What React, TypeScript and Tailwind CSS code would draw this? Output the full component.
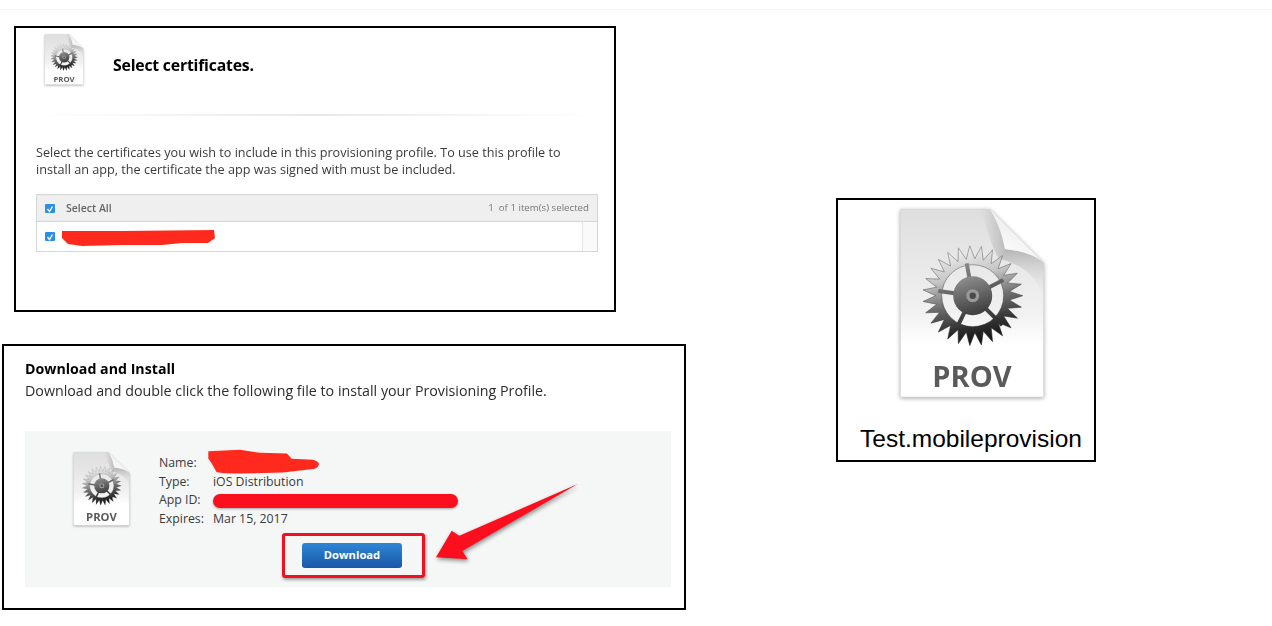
import React, { useId } from 'react';

// gear ring with long pointed teeth, hole left open so the file colour shows through
const gearPath = (() => {
  const cx = 72.7;
  const cy = 86.7;
  const teeth = 27;
  const pts: string[] = [];
  for (let i = 0; i < teeth; i++) {
    const step = (Math.PI * 2) / teeth;
    const a = i * step;
    const list: [number, number][] = [
      [37, a - step / 2],
      [50, a],
    ];
    list.forEach(([r, t]) => {
      pts.push(`${(cx + r * Math.cos(t)).toFixed(2)} ${(cy + r * Math.sin(t)).toFixed(2)}`);
    });
  }
  const ring = `M${cx - 31} ${cy}a31 31 0 1 0 62 0a31 31 0 1 0 -62 0Z`;
  return `M${pts.join('L')}Z ${ring}`;
})();

const spokes = [
  [66.7, 54.3],
  [103.3, 71],
  [102.3, 116],
  [56.7, 119],
  [38.3, 82],
];

const ProvIcon = ({ className }: { className: string }) => {
  const id = useId().replace(/[^a-zA-Z0-9]/g, '');
  return (
    <svg viewBox="0 0 144 190" className={className}>
      <defs>
        <linearGradient id={`${id}file`} x1="0" y1="0" x2="0" y2="1">
          <stop offset="0" stopColor="#dedede" />
          <stop offset="0.55" stopColor="#f1f1f1" />
          <stop offset="0.72" stopColor="#ffffff" />
        </linearGradient>
        <linearGradient id={`${id}gear`} gradientUnits="userSpaceOnUse" x1="60" y1="37" x2="82" y2="137">
          <stop offset="0" stopColor="#f2f2f2" />
          <stop offset="0.3" stopColor="#c6c6c6" />
          <stop offset="0.55" stopColor="#6f6f6f" />
          <stop offset="0.8" stopColor="#2e2e2e" />
          <stop offset="1" stopColor="#0c0c0c" />
        </linearGradient>
        <linearGradient id={`${id}edge`} gradientUnits="userSpaceOnUse" x1="60" y1="37" x2="82" y2="137">
          <stop offset="0" stopColor="#7c7c7c" />
          <stop offset="1" stopColor="#1c1c1c" />
        </linearGradient>
        <linearGradient id={`${id}spoke`} gradientUnits="userSpaceOnUse" x1="60" y1="50" x2="82" y2="122">
          <stop offset="0" stopColor="#8e8e8e" />
          <stop offset="1" stopColor="#2a2a2a" />
        </linearGradient>
        <linearGradient id={`${id}hub`} x1="0" y1="0" x2="0.3" y2="1">
          <stop offset="0" stopColor="#969696" />
          <stop offset="1" stopColor="#424242" />
        </linearGradient>
        <linearGradient id={`${id}fold`} x1="0.2" y1="1" x2="0.8" y2="0">
          <stop offset="0" stopColor="#ffffff" />
          <stop offset="1" stopColor="#e6e6e6" />
        </linearGradient>
        <linearGradient id={`${id}under`} x1="0" y1="0" x2="0" y2="1">
          <stop offset="0" stopColor="#b4b4b4" />
          <stop offset="1" stopColor="#eeeeee" stopOpacity="0" />
        </linearGradient>
        <linearGradient id={`${id}crease`} x1="0" y1="0" x2="1" y2="0">
          <stop offset="0" stopColor="#c4c4c4" stopOpacity="0" />
          <stop offset="1" stopColor="#bcbcbc" />
        </linearGradient>
      </defs>
      <path d="M0.5 0.5H90L143.5 54V188H0.5Z" fill={`url(#${id}file)`} stroke="#d6d6d6" strokeWidth="0.6" />
      <path d="M105 40C120 42 136 46 143.5 54V92C141 72 125 56 100 50Z" fill={`url(#${id}under)`} />
      <path d="M80 0.5H90C100 16 103 30 105 40L100 50C92 42 88 20 80 0.5Z" fill={`url(#${id}crease)`} />
      <path d="M90 0.5C100 16 103 30 105 40C122 42 136 46 143.5 54Z" fill={`url(#${id}fold)`} />
      <path d={gearPath} fillRule="evenodd" fill={`url(#${id}gear)`} stroke={`url(#${id}edge)`} strokeWidth="0.6" />
      {spokes.map(([x, y]) => (
        <line key={x} x1="72.7" y1="86.7" x2={x} y2={y} stroke={`url(#${id}spoke)`} strokeWidth="4" />
      ))}
      <circle cx="72.7" cy="86.7" r="19.5" fill={`url(#${id}hub)`} />
      <circle cx="72.7" cy="86.7" r="6.5" fill="#9a9a9a" />
      <circle cx="72.7" cy="86.7" r="3.2" fill="#4a4a4a" />
      <text x="72" y="178" textAnchor="middle" fontFamily="'Open Sans', sans-serif" fontWeight="700" fontSize="29" fill="#5a5a5a">
        PROV
      </text>
    </svg>
  );
};

const Tick = () => (
  <span className="flex h-[9px] w-[10px] shrink-0 items-center justify-center rounded-[1px] bg-[#2a8fe6]">
    <svg viewBox="0 0 10 9" className="h-[9px] w-[10px]">
      <path d="M2.5 5L4.5 7.5L7.5 2.5" fill="none" stroke="#ffffff" strokeWidth="1.3" />
    </svg>
  </span>
);

const App = () => {
  return (
    <div className="h-[626px] w-[1272px] overflow-hidden bg-white font-['Open_Sans',sans-serif]">
      <div className="h-[10px] border-b border-[#f2f2f2]" />
      <div className="flex items-start">
        <div className="flex w-[686px] shrink-0 flex-col">
          {/* Select certificates */}
          <section className="ml-[14px] mt-[16px] h-[286px] w-[602px] border-2 border-black">
            <div className="pl-[20px] pr-[16px] blur-[0.4px]">
              <div className="flex h-[57px] items-end">
                <ProvIcon className="ml-[8px] h-[51px] w-[40px] drop-shadow-[0_1px_1px_rgba(0,0,0,0.3)]" />
                <h2 className="mb-[10px] ml-[29px] text-[15.8px] font-bold leading-[20px] tracking-[-0.2px] text-black">
                  Select certificates.
                </h2>
              </div>
              <div className="mt-[29px] h-[2px] bg-gradient-to-r from-white via-[#e8e8e8] to-white" />
              <p className="mt-[28px] text-[12.65px] leading-[17px] text-[#3a3a3a]">
                Select the certificates you wish to include in this provisioning profile. To use this profile to
                <br />
                install an app, the certificate the app was signed with must be included.
              </p>
              <div className="mt-[16px] border-[1.5px] border-[#d6d6d6]">
                <div className="flex h-[27px] items-center border-b-[1.5px] border-[#d6d6d6] bg-[#efefef] pl-[8px] pr-[8px]">
                  <Tick />
                  <span className="ml-[11px] mt-[1px] text-[10.5px] font-semibold text-[#666]">Select All</span>
                  <span className="ml-auto text-[9.7px] text-[#777]">1&nbsp;&nbsp;of 1 item(s) selected</span>
                </div>
                <div className="flex h-[29px] items-center pl-[8px]">
                  <Tick />
                  <svg viewBox="0 0 153 16" className="ml-[7px] mt-[2px] h-[16px] w-[153px]">
                    <path d="M0 1H60L152 0L153 8L146 13L120 13L100 15L60 15L20 16L6 14L0 8Z" fill="#ff2a1d" />
                  </svg>
                  <div className="ml-auto h-full w-[15px] border-l border-[#e4e4e4] bg-[#fafafa]" />
                </div>
              </div>
            </div>
          </section>

          {/* Download and Install */}
          <section className="ml-[2px] mt-[32px] h-[266px] w-[684px] border-2 border-black pl-[21px] pr-[13px] pt-[14px]">
            <h2 className="text-[14.2px] font-bold leading-[18px] text-black blur-[0.3px]">Download and Install</h2>
            <p className="mt-[2px] text-[14.25px] leading-[22px] text-[#2c2c2c] blur-[0.3px]">
              Download and double click the following file to install your Provisioning Profile.
            </p>
            <div className="relative mt-[29px] flex h-[156px] items-start bg-[#f5f7f6]">
              <ProvIcon className="ml-[48px] mt-[21px] h-[74px] w-[57px] drop-shadow-[0_1px_1px_rgba(0,0,0,0.3)]" />
              <div className="ml-[29px] mt-[23px] text-[12.3px] leading-[18.7px] text-[#3a3a3a]">
                <div className="grid grid-cols-[54px_1fr]">
                  <span>Name:</span>
                  <span className="relative">
                    <svg viewBox="0 0 111 26" className="absolute left-[-5px] top-[-6px] h-[27px] w-[111px]">
                      <path
                        d="M0.3 2.7L32 1.3L52 4.3L79 5L83.7 10.3L105 11.3Q111 13 111 16Q110 19 107 20.3L75 24L32 25Q15 25 8.7 23.7L3.7 15L0.3 10Z"
                        fill="#ff2a1d"
                      />
                    </svg>
                  </span>
                  <span>Type:</span>
                  <span>iOS Distribution</span>
                  <span>App ID:</span>
                  <span className="flex h-[18.7px] items-center">
                    <span className="h-[14px] w-[245px] rounded-full bg-[#fb0f1f] drop-shadow-[0_1px_1px_rgba(0,0,0,0.35)]" />
                  </span>
                  <span>Expires:</span>
                  <span>Mar 15, 2017</span>
                </div>
                <div className="ml-[123px] mt-[4px] h-[45px] w-[143px] rounded-[3px] border-[3px] border-[#f0101f] px-[17px] py-[7px] shadow-[1px_2px_3px_rgba(0,0,0,0.35)]">
                  <button className="flex h-[25px] w-[100px] items-center justify-center rounded-[3px] bg-gradient-to-b from-[#2f86d6] to-[#1b57a6] text-[11.2px] font-bold text-white">
                    Download
                  </button>
                </div>
              </div>
              {/* red arrow over the panel */}
              <svg viewBox="0 0 160 90" className="absolute left-[410px] top-[50px] h-[90px] w-[160px] drop-shadow-[1px_2px_2px_rgba(0,0,0,0.45)]">
                <path d="M142.7 3L24.3 54.7L16.7 49.7L1 76.3L32.7 78.3L27.3 70Z" fill="#fb0f1f" />
              </svg>
            </div>
          </section>
        </div>

        {/* Test.mobileprovision */}
        <section className="ml-[150px] mt-[188px] h-[264px] w-[260px] border-2 border-black">
          <ProvIcon className="ml-[62px] mt-[9px] h-[190px] w-[144px] drop-shadow-[0_1px_2px_rgba(0,0,0,0.35)]" />
          <p className="ml-[22px] mt-[26px] font-['Liberation_Sans',sans-serif] text-[24.5px] leading-[28px] text-black">
            Test.mobileprovision
          </p>
        </section>
      </div>
    </div>
  );
};

export default App;
